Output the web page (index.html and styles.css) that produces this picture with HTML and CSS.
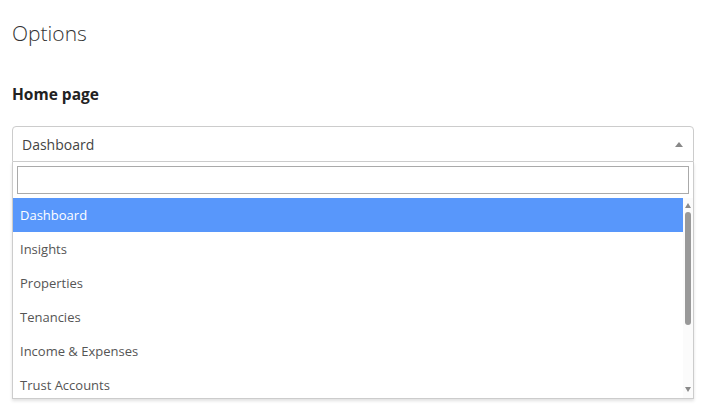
FILE: index.html
```html
<!DOCTYPE html>
<html>
<head>
<meta charset="utf-8">
<link rel="stylesheet" href="styles.css">
</head>
<body>
<div class="page">
  <h1 class="title">Options</h1>
  <label class="label">Home page</label>
  <div class="select-wrap">
    <div class="select">
      <span class="select-value">Dashboard</span>
      <span class="caret"></span>
    </div>
    <div class="dropdown">
      <div class="search-box"><input class="search" type="text"></div>
      <div class="results">
        <ul class="options">
          <li class="option active">Dashboard</li>
          <li class="option">Insights</li>
          <li class="option">Properties</li>
          <li class="option">Tenancies</li>
          <li class="option">Income &amp; Expenses</li>
          <li class="option">Trust Accounts</li>
        </ul>
        <div class="scrollbar">
          <span class="arrow up"></span>
          <span class="thumb"></span>
          <span class="track-space"></span>
          <span class="arrow down"></span>
        </div>
      </div>
    </div>
  </div>
</div>
</body>
</html>
```
FILE: styles.css
```css
* { box-sizing: border-box; }
html, body { margin: 0; padding: 0; background: #fff; }
body { font-family: "Open Sans", "Noto Sans", sans-serif; color: #333; overflow: hidden; height: 404px; }
.page { padding: 0 16px 0 12px; }
.title {
  margin: 0;
  padding-top: 18px;
  font-size: 21px;
  font-weight: 300;
  line-height: 30px;
  color: #333;
}
.label {
  display: block;
  margin-top: 36px;
  font-size: 15.5px;
  font-weight: 700;
  line-height: 20px;
  color: #222;
}
.select-wrap { margin-top: 22px; width: 682px; }
.select {
  height: 36px;
  border: 1px solid #ccc;
  border-radius: 4px 4px 0 0;
  display: flex;
  align-items: center;
  padding: 1px 9px 0;
  justify-content: space-between;
}
.select-value { font-size: 14px; color: #444; }
.caret {
  width: 0; height: 0;
  border-left: 4px solid transparent;
  border-right: 4px solid transparent;
  border-bottom: 5px solid #888;
  margin-right: 1px;
}
.dropdown {
  border: 1px solid #ccc;
  border-top: none;
  box-shadow: 0 2px 3px rgba(0,0,0,0.12);
  height: 237px;
  overflow: hidden;
}
.search-box { padding: 4px; }
.search {
  display: block;
  width: 100%;
  height: 28px;
  border: 1px solid #aaa;
  margin: 0;
  padding: 0 4px;
  outline: none;
}
.results { display: flex; height: 200px; }
.options {
  list-style: none;
  margin: 0;
  padding: 0;
  flex: 1;
  overflow: hidden;
}
.option {
  height: 34px;
  line-height: 34px;
  padding: 0 7px;
  font-size: 13px;
  color: #555;
  white-space: nowrap;
}
.option.active { background: #5897fb; color: #fff; }
.scrollbar {
  width: 10px;
  display: flex;
  flex-direction: column;
  align-items: center;
  background: #fbfbfb;
}
.arrow { width: 0; height: 0; border-left: 3.5px solid transparent; border-right: 3.5px solid transparent; }
.arrow.up { border-bottom: 5px solid #8a8a8a; margin-top: 5px; }
.arrow.down { border-top: 5px solid #8a8a8a; margin-bottom: 6px; }
.thumb {
  width: 6px;
  height: 113px;
  margin-top: 4px;
  background: #999;
  border-radius: 3px;
}
.track-space { flex: 1; }
```
